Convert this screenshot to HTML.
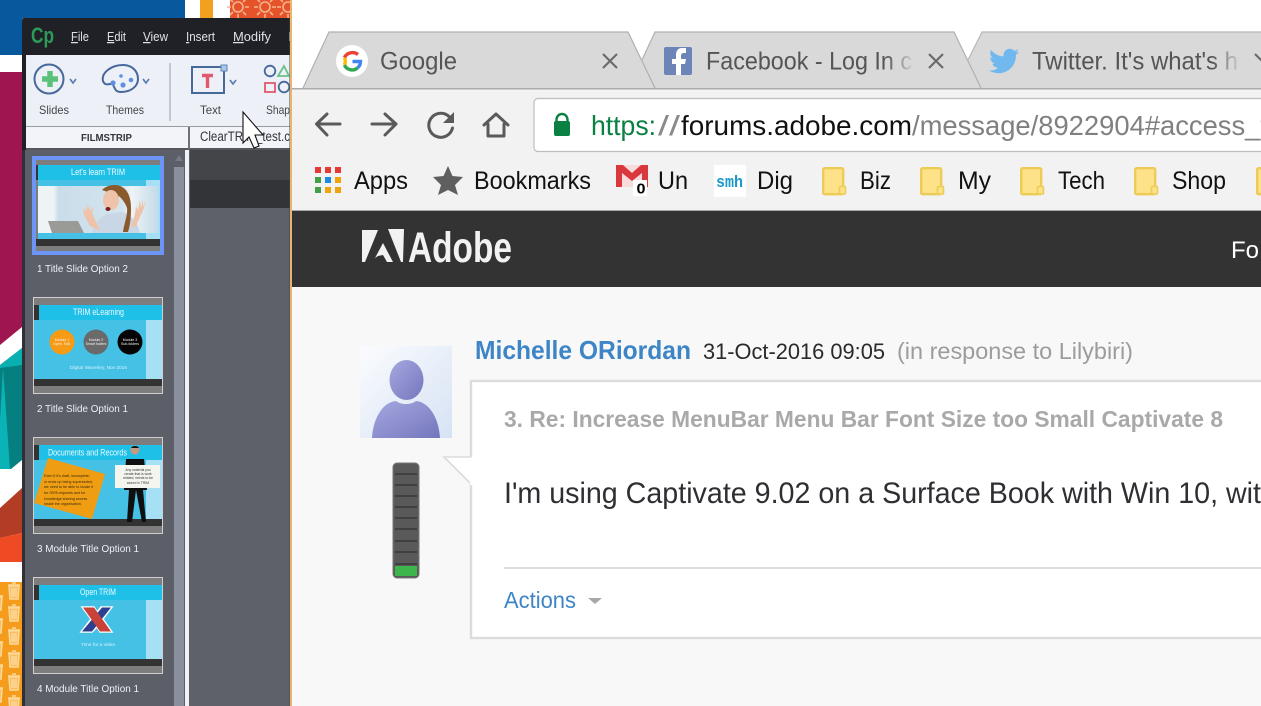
<!DOCTYPE html>
<html><head><meta charset="utf-8"><title>Captivate and Chrome</title>
<style>html,body{margin:0;padding:0;background:#fff;overflow:hidden}svg{display:block;filter:blur(.3px)}text{font-family:"Liberation Sans",sans-serif;white-space:pre}</style></head>
<body>
<svg xmlns="http://www.w3.org/2000/svg" width="1261" height="706" viewBox="0 0 1261 706">
<defs>
<linearGradient id="fade" x1="0" x2="1"><stop offset="0" stop-color="#d9d9d9" stop-opacity="0"/><stop offset="1" stop-color="#d9d9d9"/></linearGradient>
<linearGradient id="av" x1="0" y1="0" x2="1" y2="1"><stop offset="0" stop-color="#fbfcfe"/><stop offset="1" stop-color="#d6e2f4"/></linearGradient>
<linearGradient id="pers" x1="0" y1="0" x2="1" y2="1"><stop offset="0" stop-color="#a6a8e0"/><stop offset="1" stop-color="#7476bd"/></linearGradient>
<linearGradient id="photo" x1="0" x2="1"><stop offset="0" stop-color="#eef3f6"/><stop offset=".13" stop-color="#eef3f6"/><stop offset=".17" stop-color="#c9dde9"/><stop offset=".7" stop-color="#d3e4ee"/><stop offset=".78" stop-color="#eef3f6"/><stop offset="1" stop-color="#c4dbe8"/></linearGradient>
<g id="sun" fill="none" stroke="#f6b38e" stroke-width="1.6"><circle r="5"/><path d="M0-11V-7M0 7V11M-11 0H-7M7 0H11M-8-8L-5-5M5 5L8 8M8-8L5-5M-5 5L-8 8"/></g>
<g id="trash" fill="#f9bc62" stroke="#fcd998" stroke-width="1.5"><path d="M-6-6H6M-2-8H2M-5-5L-4 8H4L5-5ZM-2-3V6M0-3V6M2-3V6"/></g>
<g id="folder" fill="#fde28a" stroke="#edcb55"><rect x="1.200" y="1.200" width="20" height="26" rx="1.5" stroke-width="2.4"/><rect x="17.500" y="19.500" width="6" height="7.500" rx="1" stroke-width="1.6"/></g>
</defs>

<!-- desktop wallpaper -->
<rect width="292" height="706" fill="#fff"/>
<rect x="0" y="0" width="185" height="55" fill="#07589c"/>
<rect x="200" y="0" width="13" height="18" fill="#f3a01f"/>
<rect x="230" y="0" width="62" height="18" fill="#e4532a"/>
<use href="#sun" x="238" y="7"/><use href="#sun" x="265" y="7"/><use href="#sun" x="288" y="7"/>
<polygon points="0,72 22,72 22,327 0,345" fill="#9e1550"/>
<polygon points="0,365 22,348 22,460 11,469 0,469" fill="#067f80"/>
<polygon points="0,365 22,348 22,365 0,368" fill="#0ab0b0"/>
<polygon points="0,420 3,368 10,469 0,469" fill="#0ab3b5"/>
<polygon points="0,508 22,488 22,533 0,538" fill="#b23c24"/>
<polygon points="0,538 22,533 22,562 0,562" fill="#ee4b24"/>
<rect x="0" y="582" width="22" height="124" fill="#f59c1d"/>
<use href="#trash" x="14" y="591"/><use href="#trash" x="14" y="613"/><use href="#trash" x="14" y="636"/><use href="#trash" x="14" y="659"/><use href="#trash" x="14" y="682"/><use href="#trash" x="14" y="704"/>
<use href="#trash" x="-3" y="602"/><use href="#trash" x="-3" y="625"/><use href="#trash" x="-3" y="648"/><use href="#trash" x="-3" y="671"/><use href="#trash" x="-3" y="694"/>

<!-- Captivate window -->
<rect x="22" y="18" width="268" height="688" fill="#5c5f68"/>
<path d="M22 55V21a3 3 0 0 1 3-3H290V55Z" fill="#1f2126"/>
<rect x="22" y="55" width="4" height="95" fill="#1f2126"/>
<rect x="22" y="150" width="3" height="556" fill="#2f3038"/>
<text x="31" y="43" font-size="22" font-weight="bold" fill="#2c9a58" textLength="23" lengthAdjust="spacingAndGlyphs">Cp</text>
<g font-size="12.5" fill="#dfe1e6">
<text x="71" y="41" textLength="18" lengthAdjust="spacingAndGlyphs"><tspan text-decoration="underline">F</tspan>ile</text>
<text x="107" y="41" textLength="19" lengthAdjust="spacingAndGlyphs"><tspan text-decoration="underline">E</tspan>dit</text>
<text x="143" y="41" textLength="25" lengthAdjust="spacingAndGlyphs"><tspan text-decoration="underline">V</tspan>iew</text>
<text x="186" y="41" textLength="29" lengthAdjust="spacingAndGlyphs"><tspan text-decoration="underline">I</tspan>nsert</text>
<text x="233" y="41" textLength="38" lengthAdjust="spacingAndGlyphs"><tspan text-decoration="underline">M</tspan>odify</text>
<text x="288" y="41">I</text>
</g>
<rect x="26" y="55" width="264" height="71" fill="#eef0f7"/>
<rect x="26" y="126" width="264" height="23" fill="#f2f4f9"/>
<rect x="26" y="126" width="264" height="1" fill="#9a9ca4"/>
<rect x="26" y="148" width="264" height="2" fill="#55575e"/>
<rect x="188" y="127" width="2" height="22" fill="#6f7178"/>
<rect x="169" y="63" width="2" height="58" fill="#c3c6cc"/>
<circle cx="49" cy="79" r="14.500" fill="none" stroke="#46689b" stroke-width="2"/>
<path d="M50 71V87M42 79H58" stroke="#5cc27a" stroke-width="5.500"/>
<path d="M70 79L73 83L76 79" fill="none" stroke="#5a7db0" stroke-width="1.700"/>
<path d="M103 81C101 73 111 65 123 65C133 65 138 72 138 79C138 87 130 92 121 92C112 92 116 83 110 84C106 85 104 84 103 81Z" fill="none" stroke="#46689b" stroke-width="2"/>
<circle cx="113" cy="83" r="2.600" fill="#5f8fe0"/><circle cx="123" cy="85" r="2.600" fill="#5f8fe0"/><circle cx="121" cy="76" r="1.800" fill="#5f8fe0"/><circle cx="131" cy="80" r="2.300" fill="#5f8fe0"/>
<path d="M143 79L146 83L149 79" fill="none" stroke="#5a7db0" stroke-width="1.700"/>
<rect x="192" y="67" width="32" height="26" fill="none" stroke="#46689b" stroke-width="2"/>
<rect x="221" y="65" width="6" height="6" fill="#a9c7e8" stroke="#5f86b8"/>
<path d="M202 75.500H213M207.500 74V88" stroke="#e0596d" stroke-width="3.400" fill="none"/>
<path d="M230 80L233 84L236 80" fill="none" stroke="#5a7db0" stroke-width="1.700"/>
<circle cx="270" cy="71" r="5.300" fill="none" stroke="#46689b" stroke-width="1.800"/>
<polygon points="284,66 289,76 278,76" fill="none" stroke="#6ac18a" stroke-width="1.800"/>
<rect x="265" y="83" width="10" height="9" fill="none" stroke="#e0596d" stroke-width="1.800"/>
<circle cx="284" cy="87" r="5.300" fill="none" stroke="#46689b" stroke-width="1.800"/>
<g font-size="12" fill="#44464c">
<text x="39" y="114" textLength="30" lengthAdjust="spacingAndGlyphs">Slides</text>
<text x="106" y="114" textLength="38" lengthAdjust="spacingAndGlyphs">Themes</text>
<text x="200" y="114" textLength="21" lengthAdjust="spacingAndGlyphs">Text</text>
<text x="266" y="114" textLength="24" lengthAdjust="spacingAndGlyphs">Shap</text>
</g>
<text x="81" y="141" font-size="10.500" font-weight="bold" fill="#33353a" textLength="51" lengthAdjust="spacingAndGlyphs">FILMSTRIP</text>
<text x="200" y="141" font-size="13.500" fill="#33353a" textLength="90" lengthAdjust="spacingAndGlyphs">ClearTRIM_test.c</text>

<!-- right pane -->
<rect x="190" y="150" width="100" height="30" fill="#444549"/>
<rect x="190" y="180" width="100" height="28" fill="#333437"/>
<rect x="190" y="208" width="100" height="498" fill="#5f6168"/>
<rect x="185" y="150" width="4" height="556" fill="#f0f2f8"/>
<rect x="174" y="167" width="10" height="539" fill="#8b8e9c"/>
<polygon points="175,161 183,161 179,155" fill="#777a86"/>
<rect x="290" y="0" width="2" height="706" fill="#e9b56e"/>
<rect x="289" y="18" width="1" height="688" fill="#44464c" opacity=".5"/>

<!-- thumb 1 -->
<rect x="32" y="156" width="132" height="99" fill="#6c95f5"/>
<rect x="36" y="160" width="124" height="91" fill="#7d7d7d"/>
<rect x="36" y="165" width="2" height="15" fill="#333"/>
<rect x="38" y="165" width="122" height="15" fill="#1fc0e8"/>
<rect x="38" y="180" width="122" height="59" fill="#45c1e6"/>
<rect x="146" y="180" width="14" height="59" fill="#a6e0f5"/>
<rect x="38" y="186" width="120" height="47" fill="url(#photo)"/>
<rect x="36" y="239" width="124" height="7" fill="#333"/>
<polygon points="48,221 78,221 84,233 52,233" fill="#9a9a96"/>
<path d="M92 233C94 222 102 216 108 214L122 212C130 214 138 222 140 233Z" fill="#c8d6e6"/>
<path d="M102 190C108 184 118 184 122 187C128 190 131 198 131 208C131 218 130 226 128 232L123 232C124 224 128 214 127 208C125 202 121 198 119 196Z" fill="#8a5a2c"/>
<ellipse cx="111" cy="200" rx="8" ry="10" fill="#eec3aa"/>
<path d="M104 188C110 186 116 190 119 197L120 192C117 187 110 185 104 188Z" fill="#8a5a2c"/>
<ellipse cx="108" cy="209" rx="2.500" ry="2" fill="#7a1f1f"/>
<path d="M83 208L84 215L90 226L100 231L96 222L92 213L94 207L90 211L90 204L88 210L86 204L86 211Z" fill="#eec3aa"/>
<path d="M146 200L144 208L136 226L131 228L135 214L136 206L138 210L140 200L141 208L143 199L143 207Z" fill="#eec3aa"/>
<text x="71" y="175" font-size="9.500" fill="#eafaff" textLength="54" lengthAdjust="spacingAndGlyphs">Let's learn TRIM</text>

<!-- thumb 2 -->
<rect x="33.500" y="297.500" width="129" height="96" fill="#7d7d7d" stroke="#cfcfcf"/>
<rect x="34" y="305" width="5" height="15" fill="#333"/>
<rect x="39" y="305" width="123" height="15" fill="#1fc0e8"/>
<rect x="34" y="320" width="128" height="59" fill="#45c1e6"/>
<rect x="146" y="320" width="16" height="59" fill="#a6e0f5"/>
<rect x="34" y="379" width="128" height="7" fill="#333"/>
<text x="73" y="315" font-size="9.500" fill="#eafaff" textLength="51" lengthAdjust="spacingAndGlyphs">TRIM eLearning</text>
<circle cx="62" cy="342" r="12.500" fill="#f79a14"/><circle cx="96" cy="342" r="12.500" fill="#6a6a6a"/><circle cx="130" cy="342" r="12.500" fill="#050505"/>
<g font-size="3.500" text-anchor="middle" fill="#f4f4f4"><text x="62" y="341">Module 1</text><text x="62" y="345">Open, Edit,</text><text x="96" y="341">Module 2</text><text x="96" y="345">Smart folders</text><text x="130" y="341">Module 3</text><text x="130" y="345">Sub-folders</text></g>
<text x="70" y="369" font-size="4.600" fill="#d9f3fb" textLength="57" lengthAdjust="spacingAndGlyphs">Digital Waverley, Nov 2016</text>

<!-- thumb 3 -->
<rect x="33.500" y="437.500" width="129" height="96" fill="#7d7d7d" stroke="#cfcfcf"/>
<rect x="34" y="445" width="5" height="15" fill="#333"/>
<rect x="39" y="445" width="123" height="15" fill="#1fc0e8"/>
<rect x="34" y="460" width="128" height="59" fill="#45c1e6"/>
<rect x="146" y="460" width="16" height="59" fill="#a6e0f5"/>
<rect x="34" y="519" width="128" height="7" fill="#333"/>
<polygon points="48,458 105,474 92,519 34,503" fill="#ef9d12"/>
<text x="48" y="455.500" font-size="9" fill="#eafaff" textLength="79" lengthAdjust="spacingAndGlyphs">Documents and Records</text>
<g font-size="3.700" fill="#3b2a10">
<text x="44" y="477">Even if it's draft, incomplete,</text><text x="44" y="483">or ends up being superseded,</text><text x="44" y="488">we need to be able to locate it</text><text x="44" y="494">for GIPA requests and for</text><text x="44" y="500">knowledge sharing access</text><text x="44" y="505">inside the organisation.</text>
</g>
<circle cx="135" cy="450" r="4.500" fill="#c69a80"/>
<path d="M135 446a4.500 3 0 0 1 4 2H131a4.500 3 0 0 1 4-2Z" fill="#111"/>
<path d="M126 459L144 459L147 490H143L146 522H142L136 490L132 522H127L129 490H124Z" fill="#0f0f10"/>
<rect x="115" y="465" width="45" height="23" fill="#f5f5f0"/>
<g font-size="3.400" text-anchor="middle" fill="#333"><text x="138" y="471">Any material you</text><text x="138" y="475">create that is work</text><text x="138" y="479">related, needs to be</text><text x="138" y="484">stored in TRIM</text></g>

<!-- thumb 4 -->
<rect x="33.500" y="577.500" width="129" height="96" fill="#7d7d7d" stroke="#cfcfcf"/>
<rect x="34" y="585" width="5" height="15" fill="#333"/>
<rect x="39" y="585" width="123" height="15" fill="#1fc0e8"/>
<rect x="34" y="600" width="128" height="59" fill="#45c1e6"/>
<rect x="146" y="600" width="16" height="59" fill="#a6e0f5"/>
<rect x="34" y="659" width="128" height="7" fill="#333"/>
<text x="80" y="595" font-size="9.500" fill="#eafaff" textLength="36" lengthAdjust="spacingAndGlyphs">Open TRIM</text>
<path d="M82 607H94L97 612L101 607H112L103 619L112 632H100L97 627L92 632H81L91 619Z" fill="#fff" stroke="#fff" stroke-width="1.500"/>
<polygon points="102,607.500 111,607.500 92,631.500 82,631.500" fill="#2d3f8e"/>
<polygon points="83,607.500 94,607.500 111,631.500 100,631.500" fill="#c8423a"/>
<text x="81" y="646" font-size="4.800" fill="#d9f3fb" textLength="34" lengthAdjust="spacingAndGlyphs">Time for a video</text>

<g font-size="10.500" fill="#eef0f4">
<text x="37" y="272" textLength="91" lengthAdjust="spacingAndGlyphs">1 Title Slide Option 2</text>
<text x="37" y="412" textLength="91" lengthAdjust="spacingAndGlyphs">2 Title Slide Option 1</text>
<text x="37" y="552" textLength="102" lengthAdjust="spacingAndGlyphs">3 Module Title Option 1</text>
<text x="37" y="692" textLength="102" lengthAdjust="spacingAndGlyphs">4 Module Title Option 1</text>
</g>

<!-- browser -->
<rect x="292" y="0" width="969" height="88" fill="#fff"/>
<rect x="292" y="88" width="969" height="122" fill="#f2f2f2"/>
<polygon points="980,88 968,60 982,32 1261,32 1261,88" fill="#d9d9d9"/>
<path d="M968 60L982 32H1261" fill="none" stroke="#b8b8b8" stroke-width="1.200"/>
<polygon points="655,88 642,60 655,32 954,32 981,88" fill="#d9d9d9"/>
<path d="M642 60L655 32H954L981 88" fill="none" stroke="#b0b0b0" stroke-width="1.200"/>
<polygon points="303,88 329,32 628,32 655,88" fill="#d9d9d9"/>
<path d="M303 88L329 32H628L655 88" fill="none" stroke="#b0b0b0" stroke-width="1.200"/>
<rect x="292" y="88" width="969" height="1.500" fill="#ababab"/>

<!-- Google icon -->
<circle cx="352" cy="61" r="16" fill="#fff"/>
<path d="M344.400 65A8.500 8.500 0 0 0 344.400 57.500" fill="none" stroke="#fbbc05" stroke-width="3.400"/>
<path d="M344.400 65A8.500 8.500 0 0 0 357.500 68" fill="none" stroke="#34a853" stroke-width="3.400"/>
<path d="M357.500 68A8.500 8.500 0 0 0 360.500 61.500H352.500" fill="none" stroke="#4285f4" stroke-width="3.400"/>
<path d="M344.400 57.500A9 9 0 0 1 358 54.500" fill="none" stroke="#ea4335" stroke-width="3.400"/>
<g font-size="25" fill="#555">
<text x="380" y="69.500" textLength="77" lengthAdjust="spacingAndGlyphs">Google</text>
<text x="706" y="69.500" textLength="206" lengthAdjust="spacingAndGlyphs">Facebook - Log In c</text>
<text x="1032" y="69.500" textLength="206" lengthAdjust="spacingAndGlyphs">Twitter. It's what's h</text>
</g>
<rect x="885" y="40" width="30" height="40" fill="url(#fade)"/>
<rect x="1212" y="40" width="30" height="40" fill="url(#fade)"/>
<path d="M603 54L617 68M617 54L603 68M929 54L943 68M943 54L929 68M1255 54L1269 68" stroke="#6b6b6b" stroke-width="2.200" fill="none"/>
<rect x="664" y="47" width="28" height="28" rx="2" fill="#6d84b8"/>
<path d="M681 75V64H685L686 59H681V56C681 54 682 53 684 53H686V48H682C678 48 676 51 676 55V59H672V64H676V75Z" fill="#fff"/>
<path transform="translate(989 46) scale(1.250)" d="M23.953 4.570a10 10 0 0 1-2.825.775 4.958 4.958 0 0 0 2.163-2.723c-.951.555-2.005.959-3.127 1.184a4.920 4.920 0 0 0-8.384 4.482C7.690 8.095 4.067 6.130 1.640 3.162a4.822 4.822 0 0 0-.666 2.475c0 1.710.870 3.213 2.188 4.096a4.904 4.904 0 0 1-2.228-.616v.060a4.923 4.923 0 0 0 3.946 4.827 4.996 4.996 0 0 1-2.212.085 4.936 4.936 0 0 0 4.604 3.417 9.867 9.867 0 0 1-6.102 2.105c-.390 0-.779-.023-1.170-.067a13.995 13.995 0 0 0 7.557 2.209c9.053 0 13.998-7.496 13.998-13.985 0-.210 0-.420-.015-.630A9.935 9.935 0 0 0 24 4.590z" fill="#70b8ee"/>

<!-- toolbar icons -->
<g fill="none" stroke="#5a5a5a" stroke-width="3" stroke-linecap="round" stroke-linejoin="round">
<path d="M340 124H317M327 114L316.500 124L327 135"/>
<path d="M372 124H396M385 114L396 124L385 135"/>
<path d="M449 116.500A12 12 0 1 0 452.500 128"/>
<path d="M484 125L496 114L508 125M488 124V136H504V124"/>
</g>
<polygon points="454,112 454,123 443,123" fill="#5a5a5a"/>
<rect x="534" y="98.500" width="740" height="53" rx="4" fill="#fff" stroke="#bdbdbd" stroke-width="1.200"/>
<path d="M556.500 122V120C556.500 112 567.500 112 567.500 120V122" fill="none" stroke="#0b8043" stroke-width="2.400"/>
<rect x="554" y="121" width="16" height="15" rx="2" fill="#0b8043"/>
<g font-size="28">
<text x="591" y="135" fill="#0b8043" textLength="65" lengthAdjust="spacingAndGlyphs">https:</text>
<text x="658" y="135" fill="#8a8a8a" textLength="22" lengthAdjust="spacingAndGlyphs">//</text>
<text x="681" y="135" fill="#111" textLength="231" lengthAdjust="spacingAndGlyphs">forums.adobe.com</text>
<text x="912" y="135" fill="#808080" textLength="356" lengthAdjust="spacingAndGlyphs">/message/8922904#access_t</text>
</g>

<!-- bookmarks -->
<g>
<rect x="315" y="167" width="6" height="6" fill="#e53935"/><rect x="325" y="167" width="6" height="6" fill="#e53935"/><rect x="335" y="167" width="6" height="6" fill="#e53935"/>
<rect x="315" y="177" width="6" height="6" fill="#43a047"/><rect x="325" y="177" width="6" height="6" fill="#1e88e5"/><rect x="335" y="177" width="6" height="6" fill="#f0a30a"/>
<rect x="315" y="187" width="6" height="6" fill="#43a047"/><rect x="325" y="187" width="6" height="6" fill="#f0a30a"/><rect x="335" y="187" width="6" height="6" fill="#f0a30a"/>
</g>
<polygon points="448,166 452.500,176 463,177 455,185 458,195 448,190 438,195 441,185 433,177 443.500,176" fill="#5f5f5f"/>
<rect x="616" y="165" width="32" height="22" fill="#f6dcdc"/>
<path d="M616 165H623L632 173L641 165H648V187H642V173L632 181L622 173V187H616Z" fill="#d9383c"/>
<rect x="633" y="180" width="14" height="16" fill="#fff"/>
<text x="636.500" y="193.500" font-size="14.500" font-weight="bold" fill="#000" textLength="9" lengthAdjust="spacingAndGlyphs">0</text>
<rect x="714" y="165" width="32" height="32" fill="#fff"/>
<text x="716" y="187" font-size="17" font-weight="bold" style="font-family:'Liberation Mono',monospace" fill="#1b97c9" textLength="27" lengthAdjust="spacingAndGlyphs">smh</text>
<use href="#folder" x="822" y="167"/><use href="#folder" x="920" y="167"/><use href="#folder" x="1020" y="167"/><use href="#folder" x="1134" y="167"/><use href="#folder" x="1256" y="167"/>
<g font-size="25" fill="#111">
<text x="354" y="189" textLength="54" lengthAdjust="spacingAndGlyphs">Apps</text>
<text x="474" y="189" textLength="117" lengthAdjust="spacingAndGlyphs">Bookmarks</text>
<text x="658" y="189" textLength="30" lengthAdjust="spacingAndGlyphs">Un</text>
<text x="757" y="189" textLength="36" lengthAdjust="spacingAndGlyphs">Dig</text>
<text x="860" y="189" textLength="31" lengthAdjust="spacingAndGlyphs">Biz</text>
<text x="958" y="189" textLength="33" lengthAdjust="spacingAndGlyphs">My</text>
<text x="1058" y="189" textLength="47" lengthAdjust="spacingAndGlyphs">Tech</text>
<text x="1172" y="189" textLength="54" lengthAdjust="spacingAndGlyphs">Shop</text>
</g>

<!-- page -->
<rect x="292" y="210" width="969" height="1" fill="#a8a8a8"/>
<rect x="292" y="211" width="969" height="76" fill="#333"/>
<rect x="292" y="287" width="969" height="419" fill="#f8f8f8"/>
<polygon points="362,230 378,230 365,262 362,262" fill="#f2f2f2"/>
<polygon points="388,229 404,229 403,262 401,262" fill="#f2f2f2"/>
<polygon points="383,243 393,262 387,262 383,255 378,256 375,258" fill="#f2f2f2"/>
<text x="408" y="262" font-size="43" font-weight="bold" fill="#f2f2f2" textLength="104" lengthAdjust="spacingAndGlyphs">Adobe</text>
<text x="1231" y="258" font-size="24" fill="#fff">Fo</text>

<rect x="360" y="346" width="92" height="92" fill="url(#av)"/>
<ellipse cx="406.500" cy="380" rx="17" ry="20" fill="url(#pers)"/>
<path d="M372 438C373 418 383 402 396 401C401 405 411 405 416 401C429 402 439 418 440 438Z" fill="url(#pers)"/>
<rect x="393" y="463" width="26" height="115" rx="4" fill="#595959" stroke="#777" stroke-width="1"/>
<path d="M395 474H417M395 485H417M395 496H417M395 507H417M395 518H417M395 529H417M395 541H417M395 552H417M395 564H417" stroke="#333" stroke-width="1.300"/>
<rect x="395" y="566" width="22" height="10" fill="#3db54a"/>

<rect x="471" y="381" width="800" height="257" fill="#fff" stroke="#dcdcdc" stroke-width="2.400"/>
<polygon points="445,457 473,457 473,485" fill="#fff"/>
<path d="M471 457H444L471 484" fill="none" stroke="#dcdcdc" stroke-width="1.600"/>
<rect x="470" y="458" width="4" height="27" fill="#fff"/>
<rect x="504" y="567" width="757" height="2" fill="#dedede"/>

<text x="475" y="359" font-size="26" font-weight="bold" fill="#3d85c6" textLength="216" lengthAdjust="spacingAndGlyphs">Michelle ORiordan</text>
<text x="703" y="359" font-size="22.500" fill="#2a2a2a" textLength="182" lengthAdjust="spacingAndGlyphs">31-Oct-2016 09:05</text>
<text x="897" y="359" font-size="23" fill="#9c9c9c" textLength="236" lengthAdjust="spacingAndGlyphs">(in response to Lilybiri)</text>
<text x="504" y="427" font-size="23.500" font-weight="bold" fill="#a9a9a9" textLength="719" lengthAdjust="spacingAndGlyphs">3. Re: Increase MenuBar Menu Bar Font Size too Small Captivate 8</text>
<text x="504" y="503" font-size="30" fill="#2f2f33" textLength="757" lengthAdjust="spacingAndGlyphs">I'm using Captivate 9.02 on a Surface Book with Win 10, wit</text>
<text x="504" y="608" font-size="23" fill="#3d85c6" textLength="72" lengthAdjust="spacingAndGlyphs">Actions</text>
<polygon points="588,598 602,598 595,604" fill="#a8a8a8"/>

<!-- mouse cursor -->
<polygon points="243,112 243,143 249,137 254,148 259,146 255,135 263,135" fill="#fff" stroke="#111" stroke-width="1.100"/>
</svg>
</body></html>
